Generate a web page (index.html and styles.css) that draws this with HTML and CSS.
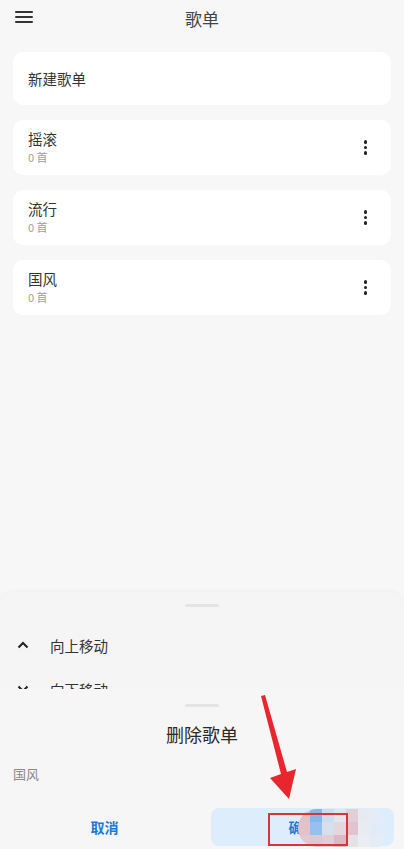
FILE: index.html
```html
<!DOCTYPE html>
<html lang="zh-CN">
<head>
    <meta charset="UTF-8">
    <meta name="viewport" content="width=device-width, initial-scale=1.0">
    <title>歌单</title>
    <link rel="stylesheet" href="styles.css">
</head>
<body>
    <div class="screen">
        <header class="top-bar">
            <svg class="menu-icon" width="18" height="14" viewBox="0 0 18 14">
                <rect x="0" y="1" width="18" height="2" rx="1" fill="#333"/>
                <rect x="0" y="6" width="18" height="2" rx="1" fill="#333"/>
                <rect x="0" y="11" width="18" height="2" rx="1" fill="#333"/>
            </svg>
            <h1 class="title">歌单</h1>
        </header>

        <div class="list">
            <div class="card new-card">新建歌单</div>

            <div class="card song-card">
                <div class="song-info">
                    <div class="song-name">摇滚</div>
                    <div class="song-count">0 首</div>
                </div>
                <span class="kebab"><i></i><i></i><i></i></span>
            </div>

            <div class="card song-card">
                <div class="song-info">
                    <div class="song-name">流行</div>
                    <div class="song-count">0 首</div>
                </div>
                <span class="kebab"><i></i><i></i><i></i></span>
            </div>

            <div class="card song-card">
                <div class="song-info">
                    <div class="song-name">国风</div>
                    <div class="song-count">0 首</div>
                </div>
                <span class="kebab"><i></i><i></i><i></i></span>
            </div>
        </div>

        <!-- menu sheet (behind) -->
        <div class="sheet move-sheet">
            <div class="handle"></div>
            <div class="menu-list">
                <div class="menu-row">
                    <svg class="chev" width="12" height="8" viewBox="0 0 12 8">
                        <path d="M1.5 6.5 L6 2 L10.5 6.5" fill="none" stroke="#222" stroke-width="2"/>
                    </svg>
                    <span>向上移动</span>
                </div>
                <div class="menu-row">
                    <svg class="chev" width="12" height="8" viewBox="0 0 12 8">
                        <path d="M1.5 1.5 L6 6 L10.5 1.5" fill="none" stroke="#222" stroke-width="2"/>
                    </svg>
                    <span>向下移动</span>
                </div>
            </div>
        </div>

        <!-- delete dialog sheet (front) -->
        <div class="sheet delete-sheet">
            <div class="handle"></div>
            <div class="dialog-title">删除歌单</div>
            <div class="dialog-text">国风</div>
            <div class="dialog-actions">
                <button class="btn btn-cancel">取消</button>
                <button class="btn btn-ok">确定</button>
            </div>
        </div>

        <!-- annotation overlays -->
        <div class="mosaic">
            <i style="background:#e4bfc9"></i><i style="background:#86b6ea"></i><i style="background:#cfdcef"></i><i style="background:#dfe6f0"></i><i style="background:#e3cdd6"></i><i style="background:#e6ebf2"></i><i style="background:#e3ecf8"></i>
            <i style="background:#e2c2cc"></i><i style="background:#96c0ee"></i><i style="background:#d6dfec"></i><i style="background:#e5d6de"></i><i style="background:#dfc3ce"></i><i style="background:#e8ecf2"></i><i style="background:#e2ebf8"></i>
            <i style="background:#e2c8d1"></i><i style="background:#dfc6d0"></i><i style="background:#e2ccd5"></i><i style="background:#d9b9c4"></i><i style="background:#e6e1e8"></i><i style="background:#eaedf2"></i><i style="background:#e4ecf7"></i>
        </div>
        <div class="red-box"></div>
        <svg class="arrow" width="404" height="849" viewBox="0 0 404 849">
            <polygon points="261,696 265,695 287,772 296,769 289,799 270,778 281,774" fill="#e8262d"/>
        </svg>
    </div>
</body>
</html>
```

FILE: styles.css
```css
* {
    box-sizing: border-box;
}
body {
    margin: 0;
    font-family: "Noto Sans CJK SC", "Noto Sans", sans-serif;
    background: #f7f7f7;
    color: #333;
}
.screen {
    position: relative;
    width: 404px;
    height: 849px;
    overflow: hidden;
}
.top-bar {
    height: 36px;
    display: flex;
    align-items: center;
    justify-content: center;
    position: relative;
}
.menu-icon {
    position: absolute;
    left: 15px;
    top: 10px;
}
.title {
    margin: 0;
    font-size: 17px;
    font-weight: 400;
    color: #444;
}
.list {
    padding: 16px 13px 0;
    display: flex;
    flex-direction: column;
    gap: 15px;
}
.card {
    background: #fff;
    border-radius: 10px;
}
.new-card {
    height: 53px;
    display: flex;
    align-items: center;
    padding-left: 15px;
    font-size: 14.5px;
    color: #333;
}
.song-card {
    height: 55px;
    display: flex;
    align-items: center;
    justify-content: space-between;
    padding: 0 24px 0 15px;
}
.song-info {
    display: flex;
    flex-direction: column;
    gap: 1px;
    margin-top: -1px;
}
.song-name {
    font-size: 14.5px;
    line-height: 20px;
    color: #333;
}
.song-count {
    font-size: 11px;
    line-height: 15px;
    color: #a0a0a0;
}
.kebab {
    display: flex;
    flex-direction: column;
    gap: 2px;
}
.kebab i {
    width: 3.5px;
    height: 3.5px;
    border-radius: 50%;
    background: #222;
}

/* bottom sheets */
.sheet {
    position: absolute;
    left: 0;
    right: 0;
    bottom: 0;
    background: #f5f5f5;
    border-radius: 14px 14px 0 0;
}
.move-sheet {
    top: 592px;
    box-shadow: 0 -1px 5px rgba(0, 0, 0, 0.04);
}
.delete-sheet {
    top: 689px;
    background: #f6f6f6;
    border-radius: 0;
    display: flex;
    flex-direction: column;
}
.handle {
    width: 34px;
    height: 3px;
    border-radius: 2px;
    background: #e4e4e4;
    margin: 12px auto 0;
}
.delete-sheet .handle {
    margin-top: 15px;
}
.menu-list {
    padding-top: 16px;
}
.menu-row {
    height: 44px;
    display: flex;
    align-items: center;
    padding-left: 17px;
    font-size: 14.5px;
    color: #333;
}
.chev {
    margin-right: 21px;
}
.dialog-title {
    text-align: center;
    font-size: 18px;
    color: #2a2a2a;
    margin-top: 14px;
    line-height: 26px;
}
.dialog-text {
    padding-left: 13px;
    font-size: 13px;
    color: #8a8a8a;
    margin-top: 18px;
    line-height: 18px;
}
.dialog-actions {
    display: flex;
    gap: 15px;
    padding: 0 10px 0 13px;
    margin-top: 25px;
}
.btn {
    flex: 1;
    height: 38px;
    border: none;
    border-radius: 8px;
    font-family: inherit;
    font-size: 14px;
    font-weight: 700;
    color: #1f78d9;
    background: transparent;
    padding: 0;
}
.btn-ok {
    background: #deedfb;
}

/* annotations */
.mosaic {
    position: absolute;
    left: 298px;
    top: 809px;
    width: 84px;
    height: 38px;
    display: grid;
    grid-template-columns: repeat(7, 12px);
    grid-auto-rows: 13px;
    border-radius: 19px 4px 4px 19px;
    overflow: hidden;
}
.red-box {
    position: absolute;
    left: 268px;
    top: 813px;
    width: 80px;
    height: 33px;
    border: 2px solid #d9343a;
}
.arrow {
    position: absolute;
    left: 0;
    top: 0;
}
```
